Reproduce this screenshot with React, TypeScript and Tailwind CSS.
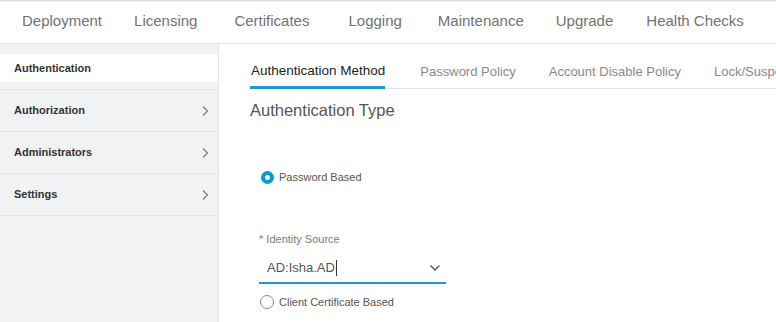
import React from "react";

const font = { fontFamily: '"Liberation Sans", Arial, sans-serif' };

function Chevron() {
  return (
    <svg width="8" height="12" viewBox="0 0 8 12" className="text-[#777]">
      <polyline points="2,1.5 6.5,6 2,10.5" fill="none" stroke="currentColor" strokeWidth="1.1" />
    </svg>
  );
}

export default function App() {
  const top: [string, string][] = [
    ["Deployment", "ml-[22px]"],
    ["Licensing", "ml-[32px]"],
    ["Certificates", "ml-[37px]"],
    ["Logging", "ml-[39px]"],
    ["Maintenance", "ml-[36px]"],
    ["Upgrade", "ml-[32px]"],
    ["Health Checks", "ml-[33px]"],
  ];
  const tabs = ["Authentication Method", "Password Policy", "Account Disable Policy", "Lock/Suspend Settings"];
  return (
    <div className="w-[776px] h-[322px] overflow-hidden bg-white flex flex-col" style={font}>
      <div className="h-[44px] shrink-0 border-b border-[#e6e6e6] shadow-[inset_0_2px_2px_-1px_rgba(0,0,0,0.18)] flex items-center text-[15px] text-[#727272]">
        {top.map(([t, m]) => (
          <span key={t} className={"whitespace-nowrap " + m}>{t}</span>
        ))}
      </div>
      <div className="flex flex-1 min-h-0">
        <div className="w-[219px] shrink-0 bg-[#f1f2f4] border-r border-[#e2e3e5] pt-[10px] flex flex-col">
          <div className="h-[28px] bg-white flex items-center pl-[14px] text-[11px] font-bold text-[#333]">Authentication</div>
          <div className="h-[8px] border-b border-[#e3e4e6]" />
          {["Authorization", "Administrators", "Settings"].map((s) => (
            <div key={s} className="h-[42px] border-b border-[#e3e4e6] flex items-center justify-between pl-[14px] pr-[9px] text-[11px] font-bold text-[#333]">
              <span>{s}</span>
              <Chevron />
            </div>
          ))}
        </div>
        <div className="flex-1 min-w-0 pl-[31px] flex flex-col overflow-hidden">
          <div className="h-[45px] border-b border-[#e3e3e3] flex items-end gap-[33px] whitespace-nowrap text-[13px] text-[#8a8a8a] pl-[1px]">
            {tabs.map((t, i) => (
              <div key={t} className={i === 0 ? "relative text-[#222] text-[13.5px] pb-[7px] mr-[2px]" : "pb-[7px]"}>
                {t}
                {i === 0 && <div className="absolute left-[-1px] right-0 bottom-[-1px] h-[3px] bg-[#1b9bd1]" />}
              </div>
            ))}
          </div>
          <div className="mt-[11px] text-[16.5px] text-[#555] leading-[20px]">Authentication Type</div>
          <div className="mt-[49px] ml-[11px] flex items-center gap-[5px]">
            <span className="w-[13px] h-[13px] rounded-full border-[4px] border-[#0a98d3] bg-white" />
            <span className="text-[11px] text-[#555]">Password Based</span>
          </div>
          <div className="mt-[46px] ml-[9px] text-[11px] text-[#7a7a7a] leading-[14px]">* Identity Source</div>
          <div className="mt-[8px] ml-[9px] w-[187px] h-[30px] border-b-2 border-[#1b9bd1] flex items-center justify-between pl-[8px] pr-[5px]">
            <span className="text-[13px] text-[#555] flex items-center">AD:Isha.AD<span className="inline-block w-[1px] h-[16px] bg-[#333] ml-[1px]" /></span>
            <svg width="12" height="8" viewBox="0 0 12 8">
              <polyline points="1.5,1.5 6,6 10.5,1.5" fill="none" stroke="#555" strokeWidth="1.4" />
            </svg>
          </div>
          <div className="mt-[10px] ml-[10px] flex items-center gap-[5px]">
            <span className="w-[14px] h-[14px] rounded-full border border-[#888] bg-white" />
            <span className="text-[11px] text-[#555]">Client Certificate Based</span>
          </div>
        </div>
      </div>
    </div>
  );
}
